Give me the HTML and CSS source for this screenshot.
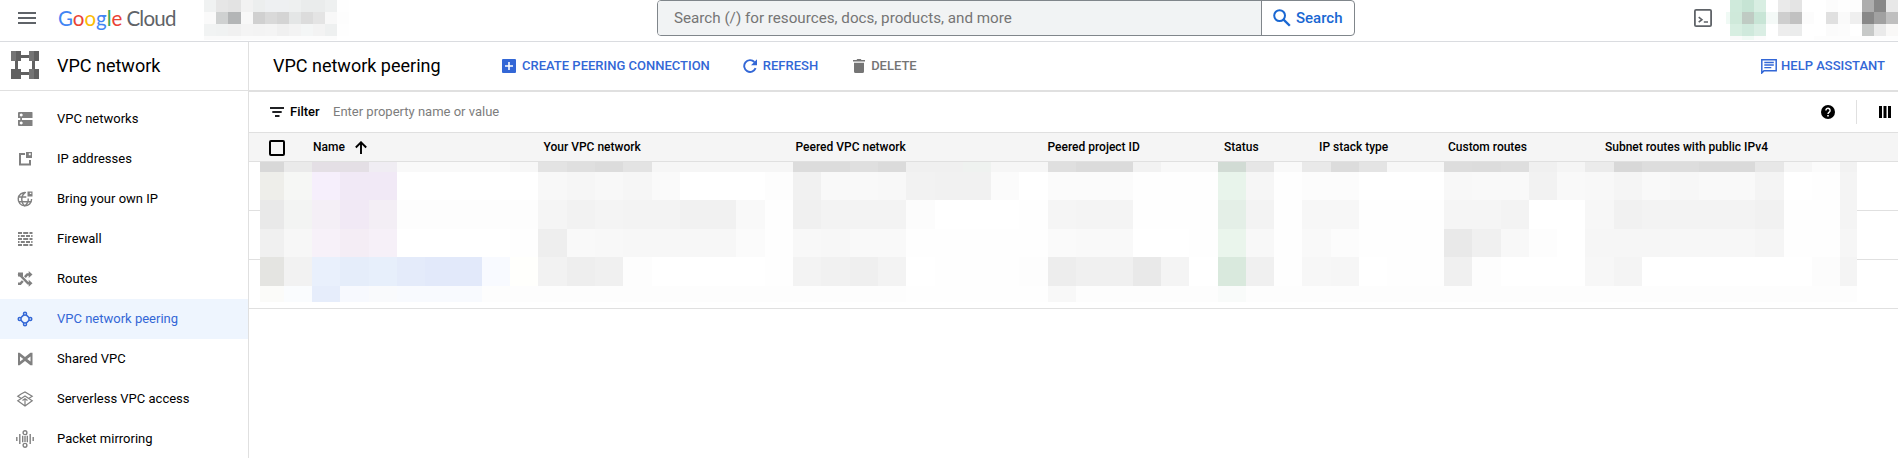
FILE: index.html
```
<!DOCTYPE html>
<html lang="en">
<head>
<meta charset="utf-8">
<title>VPC network peering</title>
<link rel="stylesheet" href="styles.css">
</head>
<body>
<header class="topbar">
  <svg class="menu" viewBox="0 0 18 12"><path d="M0 0h18v2H0zM0 5h18v2H0zM0 10h18v2H0z"/></svg>
  <div class="logo"><span class="b">G</span><span class="r">o</span><span class="y">o</span><span class="b">g</span><span class="g">l</span><span class="r">e</span><span class="cloud">Cloud</span></div>
  <svg class="project" id="project" viewBox="0 0 145 41" shape-rendering="crispEdges"></svg>
  <div class="search">
    <div class="search-field">Search (/) for resources, docs, products, and more</div>
    <div class="search-btn">
      <svg class="line" viewBox="0 0 18 18" stroke="currentColor" stroke-width="2"><circle cx="6.6" cy="6.600" r="5.400"/><path d="M10.600 10.600l6.200 6.200" stroke-width="2.300"/></svg>Search
    </div>
  </div>
  <svg class="shell line" viewBox="0 0 18 18" stroke="#5f6368"><rect x=".9" y=".9" width="16.200" height="16.200" rx="1.200" stroke-width="1.800"/><path d="M4.700 8.200l3.200 2.500-3.200 2.500M9.800 13h4.200" stroke-width="1.600"/></svg>
  <svg class="account" id="account" viewBox="0 0 178 41" shape-rendering="crispEdges"></svg>
</header>
<div class="body">
  <nav class="side">
    <div class="side-title">
      <svg viewBox="0 0 28 28"><path d="M10 4h8v3h-8zM10 21h8v3h-8zM4 10h3v8H4zM21 10h3v8h-3z" fill="#616161"/><path d="M0 0h10v10H0zM18 0h10v10H18zM0 18h10v10H0zM18 18h10v10H18z" fill="#757575"/><path d="M5 0h5v10H5zM23 0h5v10h-5zM0 18h5v10H0zM5 18h5v10H5zM23 18h5v10h-5z" fill="#616161"/></svg>
      VPC network
    </div>
    <ul class="nav">
      <li><svg viewBox="0 0 18 18"><path fill-rule="evenodd" d="M3 2h13q.5 0 .5.5V8H2V3q0-1 1-1zm2.200 1.600a1.500 1.500 0 1 0 .01 0zM2 10h14.500v5.500q0 .5-.5.500H3q-1 0-1-1zm3.200 1.600a1.500 1.500 0 1 0 .01 0zM4.200 8h1.800v2H4.200z"/></svg>VPC networks</li>
      <li><svg viewBox="0 0 18 18"><path fill-rule="evenodd" d="M3 3h6v2H5v8.500h8V10h2v5.500H3zM10 2h6v6h-6zm2.800 1.300v1.900h1.900V3.300z"/></svg>IP addresses</li>
      <li><svg viewBox="0 0 18 18"><g fill="none" stroke="currentColor" stroke-width="1.400"><path d="M10 2.600A6.700 6.700 0 1 0 15.600 9M8.800 2.600C4.700 6 4.700 12.400 8.800 16c3-2.500 3.700-5 3.400-7.500M2.300 7h8M2.300 11.800h13"/></g><path fill-rule="evenodd" d="M11.500 1.500h5v5h-5zm2.300 1.200v1.400h1.500V2.700z"/></svg>Bring your own IP</li>
      <li><svg viewBox="0 0 18 18"><path d="M2 2h4v2H2zM7.200 2h5v2h-5zM13.500 2h3v2h-3zM2 5h1.500v2H2zM4.800 5h4v2h-4zM10 5h4v2h-4zM15.200 5h1.300v2h-1.300zM2 8h4v2H2zM7.200 8h5v2h-5zM13.500 8h3v2h-3zM2 11h1.500v2H2zM4.800 11h4v2h-4zM10 11h4v2h-4zM15.200 11h1.300v2h-1.300zM2 14h4v2H2zM7.200 14h5v2h-5zM13.500 14h3v2h-3z"/></svg>Firewall</li>
      <li><svg viewBox="0 0 18 18"><g fill="none" stroke="currentColor" stroke-width="2.500"><path d="M2.500 3.500L12 13.300h2M2 13.800h2.300L6.800 11M8.900 7.200L11.300 4.500h3"/></g><path d="M12.700 1l3.800 3.500-3.800 3.500zM12.700 9.800l3.800 3.500-3.800 3.500zM2 2.500h5v4H2z"/></svg>Routes</li>
      <li class="on"><svg class="line" viewBox="0 0 18 18" stroke="currentColor" stroke-width="1.500"><circle cx="9" cy="3.700" r="1.500"/><circle cx="9" cy="14.300" r="1.500"/><circle cx="3.700" cy="9" r="1.500"/><circle cx="14.300" cy="9" r="1.500"/><path d="M7.800 4.900L4.900 7.800M10.200 4.900l2.900 2.900M7.800 13.100l-2.900-2.900M10.200 13.100l2.900-2.900"/></svg>VPC network peering</li>
      <li><svg viewBox="0 0 18 18"><path fill-rule="evenodd" d="M2 2.800h1.600L9 7l5.400-4.200h2.100v12.400h-2.100L9 11l-5.400 4.200H2zm2 3.700v5L7.300 9zm10.500 0L11.200 9l3.300 2.500z"/></svg>Shared VPC</li>
      <li><svg class="line" viewBox="0 0 18 18"><path stroke="currentColor" stroke-width="1.200" d="M5.500 3.800L9 2l7.200 4.300L13 8.200M5.500 3.800L1.800 6.300 5 8.200M9 6L1.800 10.800 9 16l7.200-5.200zM9 9v7M6.500 10.500L9 8.700l2.500 1.800"/></svg>Serverless VPC access</li>
      <li><svg class="wide line" viewBox="0 0 18 18"><g stroke="currentColor" stroke-width="1.400"><circle cx="9" cy="2.700" r="1.900"/><circle cx="9" cy="15.300" r="1.900"/><path d="M.8 7v4M3.800 4v10M14.200 4v10M17.200 7v4M6.700 5.800v6.400M11.300 5.800v6.400M9 6v6"/></g></svg>Packet mirroring</li>
    </ul>
  </nav>
  <main class="main">
    <div class="actions">
      <h1>VPC network peering</h1>
      <span class="act create"><svg viewBox="0 0 14 14"><path fill-rule="evenodd" d="M1 0h12q1 0 1 1v12q0 1-1 1H1q-1 0-1-1V1q0-1 1-1zm5.200 3v3.200H3v1.600h3.200V11h1.600V7.800H11V6.200H7.800V3z"/></svg>CREATE PEERING CONNECTION</span>
      <span class="act refresh"><svg viewBox="0 0 14 14"><path d="M12.600 9.200A5.900 5.900 0 1 1 11.400 3" fill="none" stroke="currentColor" stroke-width="1.900"/><path d="M14 .2V6.200H8z"/></svg>REFRESH</span>
      <span class="act delete"><svg viewBox="0 0 12 14"><path d="M0 1h3.500l.8-1h3.400l.8 1H12v1.500H0zM1 3.700h10v8.800q0 1.500-1.500 1.500h-7Q1 14 1 12.500z"/></svg>DELETE</span>
      <span class="act help"><svg class="line" viewBox="0 0 16 15"><path d="M.8 14V.8h14.400v11H3z" stroke="currentColor" stroke-width="1.500"/><path d="M3.300 3.500h9.500M3.300 6h9.500M3.300 8.600h7" stroke="currentColor" stroke-width="1.300"/></svg>HELP ASSISTANT</span>
    </div>
    <div class="filter">
      <svg class="f-ico" viewBox="0 0 14 10"><path d="M0 0h14v2H0zM2.300 4h9.400v2H2.300zM5 8h4.500v2H5z"/></svg>
      <b>Filter</b><span class="ph">Enter property name or value</span>
      <svg class="q-ico" viewBox="0 0 14 14"><circle cx="7" cy="7" r="7"/><path d="M4.900 5.500a2.100 2.100 0 1 1 3.500 1.500C7.500 7.700 7 8 7 9.100" fill="none" stroke="#fff" stroke-width="1.400"/><path d="M6.200 10.100h1.600v1.500H6.200z" fill="#fff"/></svg>
      <i class="sep"></i>
      <svg class="c-ico" viewBox="0 0 12 12"><path d="M0 0h3v12H0zM4.500 0h3v12h-3zM9 0h3v12H9z"/></svg>
    </div>
    <div class="thead">
      <i class="check"></i>
      <span>Name<svg viewBox="0 0 12 13"><path d="M6 13V1.500M.8 6.500L6 1.300l5.200 5.200" fill="none" stroke="#000" stroke-width="1.900"/></svg></span>
      <span>Your VPC network</span><span>Peered VPC network</span><span>Peered project ID</span><span>Status</span><span>IP stack type</span><span>Custom routes</span><span>Subnet routes with public IPv4</span>
    </div>
    <div class="rows">
      <div class="row"></div><div class="row"></div><div class="row"></div>
      <svg class="redacted" id="redacted" viewBox="0 0 1597 140" shape-rendering="crispEdges"></svg>
    </div>
  </main>
</div>
<script src="app.js"></script>
</body>
</html>
```

FILE: styles.css
```
*{box-sizing:border-box}
body{margin:0;height:458px;overflow:hidden;background:#fff;color:#000;font:13px/20px Roboto,"Liberation Sans",sans-serif;display:flex;flex-direction:column}
svg{display:block;flex:none;fill:currentColor}
svg.line{fill:none}
.topbar{height:42px;flex:none;display:flex;align-items:flex-start;border-bottom:1px solid #dadce0}
.menu{width:18px;height:12px;margin:12px 0 0 18px;color:#5f6368}
.logo{width:146px;margin:6px 0 0 22px;font:20.5px/24px Lato,sans-serif;white-space:nowrap}
.logo span{color:#4285f4}
.logo .r{color:#ea4335}
.logo .y{color:#fbbc04}
.logo .g{color:#34a853}
.logo .cloud{color:#5f6368;margin-left:4px;letter-spacing:-.75px}
.project{width:145px;height:41px}
.search{width:698px;height:36px;margin-left:308px;display:flex;border:1px solid #80868b;border-radius:4px;overflow:hidden}
.search-field{width:604px;padding:7px 0 0 16px;background:#f1f3f4;color:#757575;font-size:15.200px;border-right:1px solid #80868b}
.search-btn{flex:1;display:flex;padding:7px 0 0 11px;gap:5px;color:#1967d2;font-size:15px;font-weight:500}
.search-btn svg{width:18px;height:18px;margin-top:1px}
.shell{width:18px;height:18px;margin:9px 0 0 339px}
.account{width:178px;height:41px;margin-left:auto}
.body{flex:1;display:flex}
.side{width:249px;border-right:1px solid #e0e0e0}
.side-title{height:49px;display:flex;align-items:center;padding:0 0 1px 11px;gap:18px;border-bottom:1px solid #e0e0e0;font-size:18px}
.side-title svg{width:28px;height:28px;margin-top:-1px}
.nav{margin:0;padding:8px 0 0;list-style:none}
.nav li{height:40px;display:flex;align-items:center;padding-left:16px;gap:23px}
.nav svg{width:18px;height:18px;color:#808080}
.nav .on{background:#eef5fe;color:#3367d6}
.nav .on svg{color:#3367d6}
.main{flex:1;display:flex;flex-direction:column}
.actions{height:50px;flex:none;display:flex;align-items:center;padding:0 13px 0 24px;border-bottom:2px solid #e0e0e0}
h1{width:229px;margin:0;font-size:18px;font-weight:400}
.act{display:flex;align-items:center;color:#3367d6;font-weight:500}
.act svg{height:14px}
.create svg,.refresh svg{width:14px;margin-right:6px}
.refresh{margin-left:33px}
.delete{margin-left:35px;color:#757575}
.delete svg{width:12px;margin-right:6px}
.help{margin-left:auto}
.help svg{width:16px;height:15px;margin-right:4px}
.filter{height:40px;flex:none;display:flex;align-items:center;padding:0 7px 0 21px}
.f-ico{width:14px;height:10px;margin-right:6px;color:#202124}
.filter b{font-weight:500;width:43px}
.ph{color:#7d7d7d}
.q-ico{width:14px;height:14px;margin-left:auto}
.sep{width:1px;height:24px;margin:0 22px 0 21px;background:#e0e0e0}
.c-ico{width:12px;height:12px}
.thead{height:30px;flex:none;display:grid;grid-template-columns:44px 230.500px 252px 252px 176.500px 95px 129px 157px 1fr;align-items:center;padding-left:20px;background:#f5f5f5;border:solid #e0e0e0;border-width:1px 0;font-size:12px;font-weight:500}
.thead span{display:flex;align-items:center;white-space:nowrap}
.thead svg{width:12px;height:13px;margin-left:10px}
.check{width:16px;height:16px;margin-top:1px;border:2px solid #000;border-radius:2px}
.rows{position:relative;height:147px}
.row{height:49px;border-bottom:1px solid #e0e0e0}
.redacted{position:absolute;left:11px;top:0;width:1597px;height:140px}
```

FILE: app.js
```
// Each row is a list of "colour*count" runs; a two digit colour is a grey level.
function mosaic(id, xs, ys, rows) {
  var out = '';
  rows.forEach(function (row, r) {
    var i = 0;
    row.split(' ').forEach(function (run) {
      var p = run.split('*'), c = p[0], n = +(p[1] || 1);
      if (c.length === 2) c = c + c + c;
      out += '<rect x="' + xs[i] + '" y="' + ys[r] + '" width="' + (xs[i + n] - xs[i]) +
        '" height="' + (ys[r + 1] - ys[r]) + '" fill="#' + c + '"/>';
      i += n;
    });
  });
  document.getElementById(id).innerHTML = out;
}

var cols = [0];
for (var k = 0; k < 56; k++) cols.push(Math.round(23.6 + 28.3 * k));
cols.push(1597);
mosaic('redacted', cols, [0, 10, 38, 67, 95, 124, 140], [
  'd8 ea e4dfe5*2 f0edf3 f9*4 f7 e3 df dc e3 f6*5 dc*2 df db f0*2 eff2f0 f6*2 df db*2 f2 f8*2 d1dbd4 e6 f9 e9 dc e4 f7*2 dd dc de f0 f5 eb d8 dd*2 da*2 e7 f6 fb f2',
  'eeeeea f6f7f5 f6effc f1e9f6*2 ff*5 f8 f6 f8 f6 fa ff*3 fd f1 f9*2 f8 f2 f1*2 fb ff fb*3 fe*3 e8f4eb f6 fe fc*2 ff*3 f8 f9*2 f2 f9 f8 f5 f9 f7 f9*2 f4 ff fe f4',
  'e9 f3f4f3 f4eff6 f1e9f5 f3eef5 fd*5 f5 f2 f4 f3*2 f1*2 f9 fe f0 f3*3 fc ff*3 fe f5 f4*2 fe*3 e4efe7 f3 fe f7*2 fe*3 f5*2 f3 ff*2 f7 f1 f3*4 f1 fe*2 f4',
  'f0 f7 f7f1f9 f4edf5 f6f0f8 ff*4 fe ee f9 f8 f7*4 fb fe f8 f7 f9*2 fe*5 fa f9*2 ff*2 fe eaf5ec f8 fe f9 fc fe*3 e9 f0 f8 fd ff f6*3 f7*3 f5 fe*2 f6',
  'e4e4e1 f2 e9f0fc e5edfa e7effb e4ebfa e2e9fa*2 f8faff fffffc f2 ee f0 fd ff*4 fe f3 f1 ef f3 ff fe*3 fd ed f0*2 e9 f4 ff d9e9dd f0 fe f7 f6 ff fe*2 f0 fd ff*3 f7 f4 ff*6 fc f4',
  'fbfbf9 fafcfe e6edfb f7f9fe f9fafc f8fafe*3 fd*15 fe*5 f8 fd*5 f9fbfa fd*22'
]);

mosaic('project', [0, 12, 24, 37, 49, 61, 73, 85, 97, 109, 121, 133, 145], [0, 12, 24, 36, 40], [
  'f0f2f2 e6 e3 f2 eceeee eef0f2*2 eef0f0 eaecec*2 eef0f0 fe',
  'fa cfd1d1 b3b5b6 f8 d0 d9 d4 e4e6e6 dc e4 f8 fd',
  'f1f3f3 f0f2f2 f0 f4 f3 f4 f0 f3 f4f6f6 f3 eef0f0 fe',
  'fa*3 fb*3 fc*5 ff'
]);

mosaic('account', [0, 6, 10, 22, 34, 46, 58, 70, 82, 94, 106, 118, 130, 142, 154, 166, 178], [0, 12, 24, 36, 40], [
  'ff*2 cfeadb c6e4d4 d8eee2 ff ea e4 ff*2 fc fe fd ad 88 e8',
  'ff f0faf5 cfe9da bfcbc3 c8e5d6 f4f9f7 ce c1 fc ff e0 fa ef 88 a1 bf',
  'ff*2 d7eee1 cfe9dc daeee4 ff ed ebecec ff*2 fb fc ff c7c9c8 ea f9f8f7',
  'ff*2 fa f1faf5 fc ff*4 fd*7'
]);
```
